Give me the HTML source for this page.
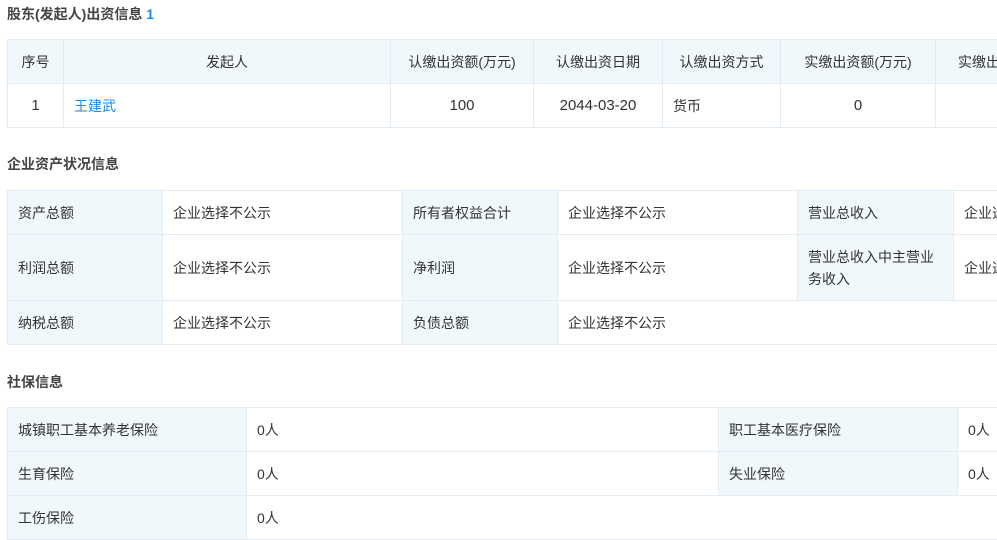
<!DOCTYPE html>
<html><head><meta charset="utf-8"><style>
body{margin:0;width:997px;height:536px;overflow:hidden;background:#fff;position:relative;font-family:"Liberation Sans","Noto Sans CJK SC",sans-serif;color:#333;font-size:14px}
.t{position:absolute;left:7px;font-size:14px;font-weight:bold;color:#444}
.c{position:absolute;box-sizing:border-box;border:1px solid #e3ebf3;display:flex;align-items:center;padding:0 10px;line-height:22px;overflow:hidden;white-space:nowrap}
.h{background:#f1f8fc}
.ctr{justify-content:center}
.w{white-space:normal}
.n{font-size:15px}
a{color:#128bed;text-decoration:none}
</style></head><body>
<div class="t" style="top:4px">股东(发起人)出资信息 <span style="color:#128bed">1</span></div>
<div class="c h ctr" style="left:7px;top:39px;width:57px;height:45px">序号</div>
<div class="c h ctr" style="left:63px;top:39px;width:328px;height:45px">发起人</div>
<div class="c h ctr" style="left:390px;top:39px;width:144px;height:45px">认缴出资额(万元)</div>
<div class="c h ctr" style="left:533px;top:39px;width:130px;height:45px">认缴出资日期</div>
<div class="c h ctr" style="left:662px;top:39px;width:119px;height:45px">认缴出资方式</div>
<div class="c h ctr" style="left:780px;top:39px;width:156px;height:45px">实缴出资额(万元)</div>
<div class="c h" style="left:935px;top:39px;width:62px;height:45px;padding-left:22px;border-right:none">实缴出资日期</div>
<div class="c ctr n" style="left:7px;top:83px;width:57px;height:45px">1</div>
<div class="c" style="left:63px;top:83px;width:328px;height:45px"><a>王建武</a></div>
<div class="c ctr n" style="left:390px;top:83px;width:144px;height:45px">100</div>
<div class="c ctr n" style="left:533px;top:83px;width:130px;height:45px">2044-03-20</div>
<div class="c" style="left:662px;top:83px;width:119px;height:45px">货币</div>
<div class="c ctr n" style="left:780px;top:83px;width:156px;height:45px">0</div>
<div class="c" style="left:935px;top:83px;width:62px;height:45px;border-right:none"></div>

<div class="t" style="top:154px">企业资产状况信息</div>
<div class="c h" style="left:7px;top:190px;width:156px;height:45px">资产总额</div>
<div class="c" style="left:162px;top:190px;width:241px;height:45px">企业选择不公示</div>
<div class="c h" style="left:402px;top:190px;width:156px;height:45px">所有者权益合计</div>
<div class="c" style="left:557px;top:190px;width:241px;height:45px">企业选择不公示</div>
<div class="c h" style="left:797px;top:190px;width:157px;height:45px">营业总收入</div>
<div class="c" style="left:953px;top:190px;width:44px;height:45px;border-right:none">企业选择不公示</div>
<div class="c h" style="left:7px;top:234px;width:156px;height:67px">利润总额</div>
<div class="c" style="left:162px;top:234px;width:241px;height:67px">企业选择不公示</div>
<div class="c h" style="left:402px;top:234px;width:156px;height:67px">净利润</div>
<div class="c" style="left:557px;top:234px;width:241px;height:67px">企业选择不公示</div>
<div class="c h w" style="left:797px;top:234px;width:157px;height:67px">营业总收入中主营业务收入</div>
<div class="c" style="left:953px;top:234px;width:44px;height:67px;border-right:none">企业选择不公示</div>
<div class="c h" style="left:7px;top:300px;width:156px;height:45px">纳税总额</div>
<div class="c" style="left:162px;top:300px;width:241px;height:45px">企业选择不公示</div>
<div class="c h" style="left:402px;top:300px;width:156px;height:45px">负债总额</div>
<div class="c" style="left:557px;top:300px;width:440px;height:45px;border-right:none">企业选择不公示</div>

<div class="t" style="top:372px">社保信息</div>
<div class="c h" style="left:7px;top:407px;width:240px;height:45px">城镇职工基本养老保险</div>
<div class="c" style="left:246px;top:407px;width:473px;height:45px">0人</div>
<div class="c h" style="left:718px;top:407px;width:240px;height:45px">职工基本医疗保险</div>
<div class="c" style="left:957px;top:407px;width:40px;height:45px;border-right:none">0人</div>
<div class="c h" style="left:7px;top:451px;width:240px;height:45px">生育保险</div>
<div class="c" style="left:246px;top:451px;width:473px;height:45px">0人</div>
<div class="c h" style="left:718px;top:451px;width:240px;height:45px">失业保险</div>
<div class="c" style="left:957px;top:451px;width:40px;height:45px;border-right:none">0人</div>
<div class="c h" style="left:7px;top:495px;width:240px;height:45px">工伤保险</div>
<div class="c" style="left:246px;top:495px;width:751px;height:45px;border-right:none">0人</div>
</body></html>
